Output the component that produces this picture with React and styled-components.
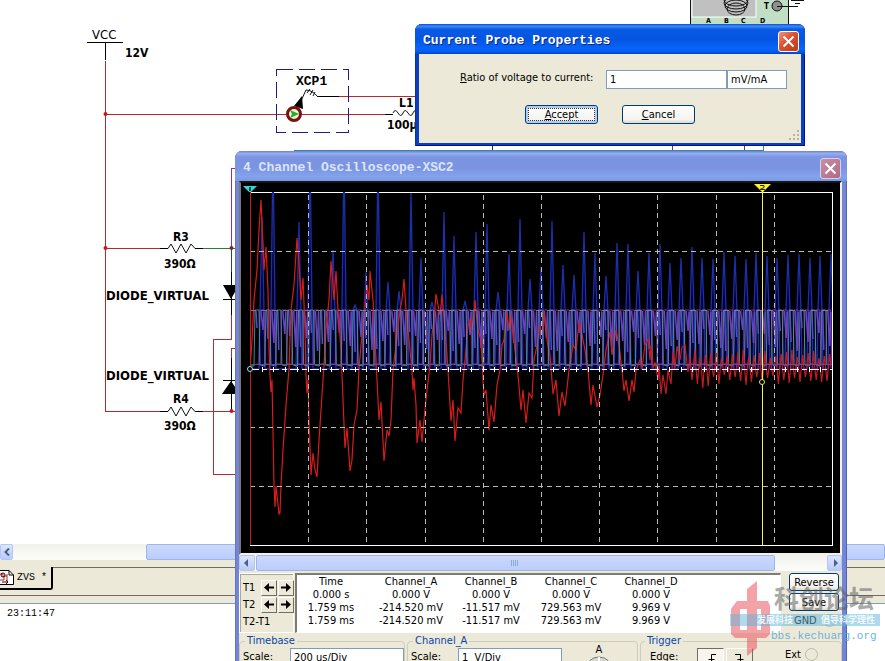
import React from "react";
import styled, { createGlobalStyle, css } from "styled-components";

const GlobalStyle = createGlobalStyle`
  * { box-sizing: border-box; }
  html, body { margin: 0; height: 100%; overflow: hidden; background: #fff; }
  body, button, input, select { font-family: "DejaVu Sans Condensed", "Liberation Sans", sans-serif; font-size: 11px; line-height: 13px; color: #000; }
`;

/* ---------- workspace ---------- */

const Desktop = styled.div`
  position: relative;
  display: flex;
  flex-direction: column;
  min-height: 100vh;
  overflow: hidden;
  background: #fff;
`;
const Schematic = styled.svg`
  display: block;
  width: 100%;
  height: 544px;
  font-family: "DejaVu Sans Condensed", "Liberation Sans", sans-serif;
  font-weight: bold;
  font-size: 13px;
`;
const ScrollTrack = styled.div`
  display: flex;
  align-items: stretch;
  height: 16px;
  background: linear-gradient(#f1f1ec, #fdfdfa);
  flex: none;
`;
const ScrollButton = styled.button`
  width: ${(p) => p.$w}px;
  margin-right: ${(p) => (p.$end ? 0 : p.$gap)}px;
  margin-left: ${(p) => (p.$end ? "auto" : "0")};
  padding: 0;
  border: 1px solid #b5c7f0;
  border-radius: 2px;
  background: linear-gradient(#dbe5fe, #b9cbf8);
  display: grid;
  place-items: center;
`;
const ScrollThumb = styled.div`
  ${(p) => (p.$w ? css`width: ${p.$w};` : css`flex: 1;`)}
  border: 1px solid #9db5ea;
  border-radius: 2px;
  background: linear-gradient(#cbd9fe, #bccdfb);
  display: grid;
  place-items: center;
`;
const TabStrip = styled.div`
  flex: none;
  height: 36px;
  padding-top: 7px;
  background: #ece9d8;
  border-bottom: 1px solid #6f6d64;
`;
const TabRow = styled.div`
  display: flex;
  height: 23px;
`;
const DocTab = styled.button`
  display: flex;
  align-items: center;
  gap: 3px;
  width: 53px;
  padding: 0;
  border: 0;
  border-right: 2px solid #000;
  border-bottom: 2px solid #000;
  border-radius: 0 0 3px 0;
  background: #ece9d8;
  font: 10px/12px "Liberation Mono", monospace;
  white-space: nowrap;
`;
const TabFill = styled.div`
  flex: 1;
  border-top: 1px solid #6f6d64;
`;
const Log = styled.div`
  flex: 1;
  border-top: 7px solid #ece9d8;
  padding: 4px 7px;
  font: 10px/13px "Liberation Mono", monospace;
  box-shadow: inset 0 1px #7f9db9;
`;

/* ---------- windows ---------- */

const Window = styled.section`
  position: absolute;
  left: ${(p) => p.$x}px;
  top: ${(p) => p.$y}px;
  width: ${(p) => p.$w}px;
  padding: 0 ${(p) => (p.$active ? 4 : 5)}px ${(p) => (p.$active ? 3 : 5)}px 4px;
  border-radius: 7px 7px 0 0;
  background: ${(p) => (p.$active ? "#0a3fc4" : "#7386d6")};
  box-shadow: inset 1px 0 ${(p) => (p.$active ? "#0831a0" : "#6575c4")}, inset -1px -1px ${(p) => (p.$active ? "#00138c" : "#5363b4")};
`;
const TitleBar = styled.header`
  display: flex;
  align-items: center;
  justify-content: space-between;
  height: 30px;
  margin: 0 ${(p) => (p.$active ? -4 : -5)}px 0 -4px;
  padding: 4px 6px 0 8px;
  border-radius: 7px 7px 0 0;
  background: ${(p) =>
    p.$active
      ? "linear-gradient(#0a4bd6 0, #3a8cf7 7%, #0a5ae6 18%, #0455e0 50%, #0665fb 82%, #0359ea 93%, #0341c0)"
      : "linear-gradient(#7080d0 0, #94aef0 8%, #7c95e2 20%, #7b93e0 55%, #82a3ee 85%, #7f97e2)"};
`;
const Title = styled.h1`
  margin: 0;
  font: bold 13px/16px "Liberation Mono", monospace;
  color: ${(p) => (p.$active ? "#fff" : "#dbe5fb")};
  text-shadow: ${(p) => (p.$active ? "1px 1px #0a2478" : "none")};
  white-space: pre;
`;
const CloseButton = styled.button`
  width: 21px;
  height: 21px;
  padding: 0;
  border: 1px solid ${(p) => (p.$active ? "#fff" : "#ced4f2")};
  border-radius: 3px;
  background: ${(p) => (p.$active ? "linear-gradient(135deg, #ee9478, #dc5030 45%, #bd3a16)" : "linear-gradient(135deg, #c98fa4, #b06a83)")};
  display: grid;
  place-items: center;
`;

/* ---------- dialog ---------- */

const DialogBody = styled.form`
  position: relative;
  background: #ece9d8;
  padding: 16px 14px 19px 41px;
  margin: 0;
`;
const RatioRow = styled.div`
  display: flex;
  align-items: center;
  label { width: 146px; white-space: nowrap; padding-bottom: 4px; }
`;
const TextBox = styled.input`
  width: ${(p) => p.$w};
  min-width: 0;
  height: ${(p) => p.$h || 19}px;
  padding: 1px 3px;
  border: 1px solid #7f9db9;
  background: #fff;
`;
const ButtonRow = styled.div`
  display: flex;
  gap: 24px;
  margin: 16px 0 0 65px;
`;
const PushButton = styled.button`
  width: ${(p) => p.$w}px;
  height: ${(p) => p.$h}px;
  padding: 0;
  border: 1px solid #003c74;
  border-radius: 3px;
  background: linear-gradient(#fff, #f4f3ee 80%, #dcd8cc);
  white-space: nowrap;
  ${(p) => p.$focused && css`
    box-shadow: inset 0 0 0 2px #b4caf2;
    outline: 1px dotted #333;
    outline-offset: -4px;
  `}
`;
const Grip = styled.svg`
  position: absolute;
  right: 1px;
  bottom: 1px;
`;

/* ---------- oscilloscope ---------- */

const Screen = styled.svg`
  display: block;
  width: 100%;
  border: 2px solid #8a8878;
  border-top-color: #16161c;
  border-left-color: #77767a;
  border-bottom-color: #f4f2e8;
  border-right-color: #f4f2e8;
  background: #000;
`;
const Panel = styled.div`
  background: #ece9d8;
`;
const Readout = styled.div`
  display: flex;
  padding-top: 2px;
`;
const CursorBox = styled.div`
  display: grid;
  grid-template-columns: 18px 17px 17px;
  grid-template-rows: 17px 17px 17px;
  align-items: center;
  width: 55px;
  padding: 5px 0 0 3px;
  border: 1px solid #fff;
  box-shadow: inset 1px 1px #aca899;
  white-space: nowrap;
`;
const StepButton = styled.button`
  width: 16px;
  height: 16px;
  padding: 0;
  border: 1px solid #fff;
  border-right-color: #716f64;
  border-bottom-color: #716f64;
  background: #ece9d8;
  display: grid;
  place-items: center;
`;
const Values = styled.div`
  flex: 1;
  height: 60px;
  margin-left: 1px;
  border: 2px solid #807d70;
  border-right: 1px solid #fff;
  border-bottom: 1px solid #fff;
  background: #fff;
  overflow: hidden;
`;
const ValueTable = styled.table`
  border-collapse: collapse;
  table-layout: fixed;
  width: 394px;
  th, td { padding: 0; height: 13px; line-height: 13px; font-weight: normal; text-align: center; white-space: nowrap; }
  th:first-child { width: 74px; }
  th:first-child, td:first-child { padding-right: 6px; }
`;
const SideButtons = styled.div`
  display: flex;
  flex-direction: column;
  gap: 2px;
  width: 61px;
  padding: 0 0 0 8px;
  label { display: flex; align-items: center; gap: 6px; padding: 1px 0 0 5px; }
`;
const Radio = styled.input`
  appearance: none;
  width: 13px;
  height: 13px;
  margin: 0;
  border: 1px solid #b9bcae;
  border-radius: 50%;
  background: ${(p) => (p.$plain ? "#ece9d8" : "#dfe8e4")};
`;
const Groups = styled.div`
  display: flex;
  gap: 2px;
  padding-top: 1px;
`;
const Group = styled.fieldset`
  ${(p) => (p.$w ? css`width: ${p.$w}px;` : css`flex: 1;`)}
  min-width: 0;
  height: 90px;
  margin: 0;
  padding: 0 0 0 ${(p) => p.$pad || 3}px;
  border: 1px solid #cfccba;
  border-radius: 4px;
  legend { color: #0a46a5; padding: 0 2px; margin-left: ${(p) => (p.$pad ? -5 : 2)}px; line-height: 14px; }
`;
const Field = styled.div`
  display: flex;
  align-items: flex-start;
  label { width: 47px; padding-top: 2px; white-space: nowrap; }
`;
const Knob = styled.div`
  width: 44px;
  margin: -5px 0 0 15px;
  text-align: center;
  svg { display: block; margin: auto; }
`;
const EdgeButton = styled.button`
  width: 27px;
  height: 24px;
  margin-right: 2px;
  padding: 0;
  border: 1px solid ${(p) => (p.$on ? "#716f64" : "#fff")};
  border-right-color: ${(p) => (p.$on ? "#fff" : "#716f64")};
  background: ${(p) => (p.$on ? "#f7f5ee" : "#ece9d8")};
`;
const ExtLabel = styled.label`
  display: flex;
  gap: 4px;
  margin-left: 30px;
  && { width: auto; padding: 0; }
`;

/* ---------- watermark ---------- */

const Watermark = styled.div`
  position: absolute;
  left: 730px;
  top: 580px;
  display: flex;
  pointer-events: none;
  white-space: nowrap;
`;
const MarkText = styled.div`
  margin-left: -40px;
  width: 150px;
`;
const MarkName = styled.div`
  padding-left: 44px;
  font: bold 25px/34px "Noto Sans CJK SC", sans-serif;
  color: rgba(95, 95, 95, 0.55);
`;
const MarkBand = styled.div`
  display: flex;
  gap: 28px;
  height: 12px;
  padding-left: 27px;
  background: rgba(95, 180, 220, 0.5);
  font: bold 9px/12px "Noto Sans CJK SC", sans-serif;
  color: rgba(245, 252, 255, 0.95);
`;
const MarkUrl = styled.div`
  padding-left: 41px;
  font: 11px/20px "Liberation Mono", monospace;
  color: rgba(80, 165, 215, 0.85);
`;

/* ---------- waveform data ---------- */

const bluePeaks = [
  [262, 217], [273, 150], [299, 222], [310, 150], [333, 250], [344, 150], [355, 305], [366, 272], [378, 160],
  [388, 282], [399, 291], [411, 193], [421, 258], [432, 302], [444, 212], [454, 236], [465, 301], [476, 232],
  [487, 224], [498, 292], [509, 254], [520, 219], [530, 279], [541, 267], [552, 221], [563, 265], [574, 275],
  [584, 232], [595, 253], [606, 276], [617, 243], [628, 244], [638, 271], [649, 253], [660, 244], [670, 263],
  [681, 258], [692, 247], [702, 258], [713, 259], [724, 252], [735, 256], [746, 259], [756, 253], [767, 256],
  [777, 258], [788, 255], [799, 254], [810, 258], [820, 256], [831, 254],
];
const bluePath = "M250 369 " + bluePeaks.map(([x, y]) => `L${x - 3} 369 L${x - 2} 310 L${x} ${y} L${x + 2} 310 L${x + 3} 369`).join(" ");

const redHead =
  "250,369 252,340 254,300 257,270 259,230 261,200 263,245 264,270 266,247 268,290 269,350 270,375 271,392 272,380 273,433 274,485 275,507 276,486 279,514 280,513 281,485 283,450 286,405 289,369 291,310 294,285 297,238 299,265 301,300 303,278 305,330 306,375 307,393 308,380 309,420 311,475 313,453 315,470 317,477 319,440 321,410 324,365 326,330 329,300 331,261 333,285 334,300 336,271 338,310 341,350 343,400 345,448 347,428 350,471 352,460 354,425 357,410 359,369 361,345 364,320 367,285 369,300 370,271 373,300 375,340 377,380 379,420 381,402 384,461 387,430 389,436 391,420 393,370 396,345 400,310 402,300 404,279 406,310 408,330 410,350 412,370 413,390 414,378 416,405 417,443 420,420 422,442 424,420 427,390 430,365 432,335 434,320 436,294 438,305 440,315 442,295 445,330 448,370 451,421 453,400 455,441 458,408 461,413 463,380 466,350 468,325 470,320 472,330 474,315 475,300 478,330 481,340 483,380 484,395 486,390 489,430 491,405 494,422 497,385 500,370 502,345 504,340 507,312 509,330 511,316 515,350 518,375 521,410 523,390 526,423 529,393 532,398 534,360 537,345 540,325 542,335 544,312 547,340 550,355 553,394 556,380 559,416 562,392 565,406 569,370 573,345 576,350 579,322 582,335 585,350 588,370 591,405 593,385 597,407 600,395 603,375 606,350 610,332 612,355 616,330 619,345 622,370 624,391 626,380 629,401 632,380 634,392 636,370";
const redMiddle =
  "636,370 640,360 642,369 645,345 648,339 650,360 651,345 653,368 655,362 658,380 659,365 661,394 663,375 666,394 668,370 671,384 673,352 675,369 677,346 680,360 682,347 685,345 688,372 690,358";
const redLows = [380, 384, 388, 386, 377, 384, 375, 380, 377, 381, 385, 382, 377, 383, 378, 376, 384, 380, 383, 378, 382, 377, 381, 380, 382, 381];
const redTail = redLows.map((low, i) => {
  const x = 692 + i * 5.4;
  return `${x.toFixed(1)},${low} ${(x + 1.5).toFixed(1)},366 ${(x + 2.7).toFixed(1)},${350 + ((i * 7) % 9)} ${(x + 4).toFixed(1)},368`;
}).join(" ");

const cycles = Array.from({ length: 53 }, (_, i) => 254 + i * 10.9);
const tealPath = "M250 366 " + cycles.map((x) => `L${x} 366 L${x + 1} 310 L${x + 5} 310 L${x + 6} 365`).join(" ");
const magentaPath = "M250 365 " + cycles.map((x) => `L${x + 5} 364 L${x + 6} 310 L${x + 10} 310 L${x + 11} 364`).join(" ");
const violetPath = cycles.map((x, i) => `M${x + 7} 311 L${x + 9} ${330 + ((i * 13) % 22)} L${x + 10} 312 M${x + 2} 311 L${x + 3} ${328 + ((i * 11) % 25)}`).join(" ");
const columns = [308, 366, 425, 483, 541, 599, 657, 716, 774];
const rows = [251, 310, 427, 486];
const ticks = Array.from({ length: 50 }, (_, i) => 250 + i * 11.64);

const readings = [
  ["0.000 s", "0.000 V", "0.000 V", "0.000 V", "0.000 V"],
  ["1.759 ms", "-214.520 mV", "-11.517 mV", "729.563 mV", "9.969 V"],
  ["1.759 ms", "-214.520 mV", "-11.517 mV", "729.563 mV", "9.969 V"],
];

function Chevron({ dir, color = "#4d6185" }) {
  return (
    <svg width="8" height="8" viewBox="0 0 8 8">
      <path d={dir === "left" ? "M6 0.5 2.5 4 6 7.5" : "M2 0.5 5.5 4 2 7.5"} fill="none" stroke={color} strokeWidth="2" />
    </svg>
  );
}

function Triangle({ dir }) {
  return (
    <svg width="8" height="8" viewBox="0 0 8 8">
      <path d={dir === "left" ? "M5 0 1 4 5 8Z" : "M3 0 7 4 3 8Z"} fill="#4d6185" />
    </svg>
  );
}

function Arrow({ dir }) {
  return (
    <svg width="10" height="9" viewBox="0 0 10 9">
      <path d={dir === "left" ? "M0 4.5 5 0V3.5H10V5.5H5V9Z" : "M10 4.5 5 0V3.5H0V5.5H5V9Z"} fill="#000" />
    </svg>
  );
}

function Cross() {
  return (
    <svg width="13" height="13" viewBox="0 0 13 13">
      <path d="M1.5 1.5 11.5 11.5M11.5 1.5 1.5 11.5" stroke="#fff" strokeWidth="2" />
    </svg>
  );
}

function Circuit() {
  return (
    <Schematic aria-label="Schematic">
      <g fill="none" stroke="#b8292b" shapeRendering="crispEdges">
        <path d="M105.5 61V411.5H160M105 114.5H385M339 96.5H416M105 248.5H160M203 411.5H240M231.5 315V339.5H213.5V474.5H240M240 348.5H231.5V358" />
        <path d="M203 248.5H240" stroke="#2a7f35" />
        <path d="M240 168.5H231.5V248" stroke="#9030a0" />
        <path d="M231.5 249V272" stroke="#1c5230" />
        <path d="M294 150.5H763.5V146" stroke="#2f8ba8" />
        <path d="M492.5 146V150" stroke="#202070" />
        <path d="M672.5 146V150M744.5 146V150" stroke="#802878" />
        <path d="M87 42.5H123M105.5 42V60M318 96.5H339M385 114.5H393M160 248.5H168M195 248.5H203M160 411.5H168M195 411.5H203M231.5 272V315M231.5 358V411M223 299.5H240M223 380.5H240" stroke="#000" />
        <path d="M276.5 69.5H348.5V132.5H276.5Z" stroke="#1d1d88" strokeDasharray="16 6" />
      </g>
      <g fill="none" stroke="#111">
        <path d="M168 248.5 171 244 176 253 181 244 186 253 191 244 195 248.5M168 411.5 171 407 176 416 181 407 186 416 191 407 195 411.5" />
        <path d="M393 113q2-5 5 0t5 0t5 0t5 0t5 0" />
        <path d="M301 101 306 90Q312 90 318 97M307 93 310 89M310 95 313 90M313 96 315 92" />
      </g>
      <path d="M223 285H239L231 299ZM222 394H240L231 381ZM294 106 302 96 303 109Z" />
      <circle cx="294" cy="114" r="6.5" fill="#e8f3e0" stroke="#7c1010" strokeWidth="3" />
      <path d="M290 110 299 114 290 118 292 114Z" fill="#20b020" />
      <g fill="#c01a1e">
        <circle cx="105.500" cy="114" r="2" />
        <circle cx="105.500" cy="248" r="2" />
        <circle cx="231.500" cy="411" r="2" />
        <circle cx="231.500" cy="248" r="2" fill="#703020" />
      </g>
      <text x="92" y="39" fontWeight="normal">VCC</text>
      <text x="125" y="57" fontSize="12">12V</text>
      <text x="296" y="85" fontFamily="Liberation Mono">XCP1</text>
      <text x="399" y="107" fontSize="12">L1</text>
      <text x="387" y="129" fontSize="12">100µH</text>
      <text x="173" y="241" fontSize="12">R3</text>
      <text x="164" y="268" fontSize="12">390Ω</text>
      <text x="106" y="300">DIODE_VIRTUAL</text>
      <text x="106" y="380">DIODE_VIRTUAL</text>
      <text x="173" y="403" fontSize="12">R4</text>
      <text x="164" y="430" fontSize="12">390Ω</text>
      <rect x="690.500" y="-5" width="98" height="40" fill="#c2dec4" stroke="#111" />
      <rect x="692" y="-3" width="64" height="20" fill="#c0c0c0" stroke="#fff" />
      <g fill="none" stroke="#111">
        <ellipse cx="736" cy="0" rx="12" ry="6" />
        <ellipse cx="736" cy="3" rx="12" ry="6" />
        <ellipse cx="736" cy="6" rx="11" ry="6" />
        <ellipse cx="736" cy="9" rx="9" ry="6" />
        <circle cx="777" cy="6" r="5" fill="#909090" />
        <path d="M777 6.5H798M791 0.500H804M795 3.500H800" />
      </g>
      <g fontSize="7">
        <text x="706" y="23">A</text>
        <text x="724" y="23">B</text>
        <text x="741" y="23">C</text>
        <text x="760" y="23">D</text>
        <text x="764" y="9" fontSize="8">T</text>
      </g>
    </Schematic>
  );
}

function ScopeScreen() {
  return (
    <Screen viewBox="241 183 599 370" role="img" aria-label="Oscilloscope traces">
      <defs>
        <clipPath id="plot"><rect x="250" y="192" width="582" height="354" /></clipPath>
      </defs>
      <path d="M250 192.500H832.500V545.500H250" fill="none" stroke="#fff" shapeRendering="crispEdges" />
      <g clipPath="url(#plot)" fill="none">
        <path d={bluePath} stroke="#1c2fa8" strokeWidth="1.300" fill="#000038" />
        <path d={magentaPath} stroke="#952690" />
        <path d={violetPath} stroke="#6048c4" strokeWidth="1.500" />
        <polyline points={redHead} stroke="#d81c1c" strokeWidth="1.200" />
        <path d={tealPath} stroke="#409aa6" strokeOpacity="0.9" />
        <polyline points={redMiddle + " " + redTail} stroke="#c41c24" strokeWidth="1.200" />
        <path d="M250 364.500H832" stroke="#66489a" />
        <path d="M250 310.500H832" stroke="#8c6cac" strokeDasharray="6 5" />
      </g>
      <g stroke="#b9b9b9" strokeDasharray="5 4" shapeRendering="crispEdges">
        {columns.map((x) => <path key={x} d={`M${x}.5 195V545`} />)}
        {rows.filter((y) => y !== 310).map((y) => <path key={y} d={`M250 ${y}.5H832`} />)}
      </g>
      <path d="M250 369.500H832" stroke="#fff" strokeDasharray="9 3 5 3" shapeRendering="crispEdges" />
      <path d={ticks.map((x) => `M${Math.round(x)}.5 367V372`).join("")} stroke="#fff" shapeRendering="crispEdges" />
      <path d="M250.500 192V545" stroke="#c41c1c" shapeRendering="crispEdges" />
      <path d="M762.500 192V545" stroke="#f4ee6a" shapeRendering="crispEdges" />
      <path d="M243 186H257L251 192H249Z" fill="#36d6d6" />
      <path d="M250 187V191" stroke="#004848" strokeWidth="2" />
      <path d="M754 184H771L763 192H762Z" fill="#fff22c" />
      <path d="M760 185.500H764V187.500L760 189.500H765" fill="none" stroke="#222" />
      <circle cx="250" cy="369" r="2.500" fill="#000" stroke="#9de6de" />
      <circle cx="762" cy="382" r="2.500" fill="#000" stroke="#e8e860" />
    </Screen>
  );
}

function Oscilloscope() {
  return (
    <Window $x={235} $y={151} $w={612}>
      <TitleBar>
        <Title>4 Channel Oscilloscope-XSC2</Title>
        <CloseButton aria-label="Close oscilloscope"><Cross /></CloseButton>
      </TitleBar>
      <ScopeScreen />
      <ScrollTrack>
        <ScrollButton $w={16} $gap={1} aria-label="Scroll left"><Triangle dir="left" /></ScrollButton>
        <ScrollThumb $w="86%">
          <svg width="8" height="6"><path d="M0.500 0V6M2.500 0V6M4.500 0V6M6.500 0V6" stroke="#8ca6e4" /></svg>
        </ScrollThumb>
        <ScrollButton $w={15} $end aria-label="Scroll right"><Triangle dir="right" /></ScrollButton>
      </ScrollTrack>
      <Panel>
        <Readout>
          <CursorBox>
            <span>T1</span>
            <StepButton aria-label="T1 left"><Arrow dir="left" /></StepButton>
            <StepButton aria-label="T1 right"><Arrow dir="right" /></StepButton>
            <span>T2</span>
            <StepButton aria-label="T2 left"><Arrow dir="left" /></StepButton>
            <StepButton aria-label="T2 right"><Arrow dir="right" /></StepButton>
            <span>T2-T1</span>
          </CursorBox>
          <Values>
            <ValueTable>
              <thead>
                <tr>{["Time", "Channel_A", "Channel_B", "Channel_C", "Channel_D"].map((h) => <th key={h}>{h}</th>)}</tr>
              </thead>
              <tbody>
                {readings.map((r, i) => <tr key={i}>{r.map((v, j) => <td key={j}>{v}</td>)}</tr>)}
              </tbody>
            </ValueTable>
          </Values>
          <SideButtons>
            <PushButton $w={50} $h={18}>Reverse</PushButton>
            <PushButton $w={50} $h={18}>Save</PushButton>
            <label>GND<Radio type="radio" name="ground" /></label>
          </SideButtons>
        </Readout>
        <Groups>
          <Group $w={166}>
            <legend>Timebase</legend>
            <Field>
              <label htmlFor="timebase">Scale:</label>
              <TextBox id="timebase" $w="114px" defaultValue="200 us/Div" />
            </Field>
          </Group>
          <Group $w={231}>
            <legend>Channel_A</legend>
            <Field>
              <label htmlFor="channel">Scale:</label>
              <TextBox id="channel" $w="104px" defaultValue="1  V/Div" />
              <Knob>
                A
                <svg width="30" height="30" viewBox="0 0 30 30">
                  <circle cx="15" cy="15" r="14" fill="#d8d8d2" stroke="#777" />
                  <path d="M15 1V15M5 5 15 15M25 5 15 15" stroke="#fff" strokeWidth="2" />
                </svg>
              </Knob>
            </Field>
          </Group>
          <Group $pad={9}>
            <legend>Trigger</legend>
            <Field>
              <label>Edge:</label>
              <EdgeButton $on aria-label="Rising edge">
                <svg width="12" height="14"><path d="M1 12.500H6.500V2.500H11M3.500 7.500H9.500" fill="none" stroke="#000" /></svg>
              </EdgeButton>
              <EdgeButton aria-label="Falling edge">
                <svg width="12" height="14"><path d="M1 2.500H6.500V12.500H11M3.500 7.500H9.500" fill="none" stroke="#000" /></svg>
              </EdgeButton>
              <ExtLabel>Ext<Radio $plain type="radio" name="source" /></ExtLabel>
            </Field>
          </Group>
        </Groups>
      </Panel>
    </Window>
  );
}

function ProbeDialog() {
  return (
    <Window $active $x={415} $y={24} $w={390} role="dialog" aria-label="Current Probe Properties">
      <TitleBar $active>
        <Title $active>Current Probe Properties</Title>
        <CloseButton $active aria-label="Close dialog"><Cross /></CloseButton>
      </TitleBar>
      <DialogBody onSubmit={(e) => e.preventDefault()}>
        <RatioRow>
          <label htmlFor="ratio"><u>R</u>atio of voltage to current:</label>
          <TextBox id="ratio" $w="121px" defaultValue="1" />
          <TextBox aria-label="Unit" $w="60px" defaultValue="mV/mA" />
        </RatioRow>
        <ButtonRow>
          <PushButton type="button" $focused $w={73} $h={19}><u>A</u>ccept</PushButton>
          <PushButton type="button" $w={73} $h={19}><u>C</u>ancel</PushButton>
        </ButtonRow>
        <Grip width="12" height="12">
          <path d="M9 0h2v2h-2zM5 4h2v2h-2zM9 4h2v2h-2zM1 8h2v2h-2zM5 8h2v2h-2zM9 8h2v2h-2z" fill="#b8b4a2" />
        </Grip>
      </DialogBody>
    </Window>
  );
}

export default function App() {
  return (
    <Desktop>
      <GlobalStyle />
      <Circuit />
      <ScrollTrack>
        <ScrollButton $w={13} $gap={133} aria-label="Scroll schematic left"><Chevron dir="left" /></ScrollButton>
        <ScrollThumb />
      </ScrollTrack>
      <TabStrip>
        <TabRow>
          <DocTab>
            <svg width="14" height="17" viewBox="0 0 14 17">
              <path d="M-1 1.500H9L13.500 6V15.500H-1" fill="#fff" stroke="#000" />
              <path d="M9 1.500V6H13.500" fill="none" stroke="#000" />
              <path d="M0 5H3M0 11H4V7H7M3 5V8M7 5V12" fill="none" stroke="#c02020" />
              <circle cx="3" cy="6" r="2" fill="none" stroke="#400" />
              <path d="M2 13H8M6 11 8 13 6 15" fill="none" stroke="#400" />
            </svg>
            ZVS *
          </DocTab>
          <TabFill />
        </TabRow>
      </TabStrip>
      <Log>23:11:47</Log>
      <Oscilloscope />
      <ProbeDialog />
      <Watermark>
        <svg width="40" height="80" viewBox="0 0 40 80">
          <path d="M17 9 27 1V68L17 76ZM3 26 7 21H38L40 26V54L36 58H26V50H31V29H10V50H17V58H5L1 54V29Z" fill="#e84850" fillOpacity="0.5" />
        </svg>
        <MarkText>
          <MarkName>科创论坛</MarkName>
          <MarkBand><span>发展科技</span><span>倡导科学理性</span></MarkBand>
          <MarkUrl>bbs.kechuang.org</MarkUrl>
        </MarkText>
      </Watermark>
    </Desktop>
  );
}
